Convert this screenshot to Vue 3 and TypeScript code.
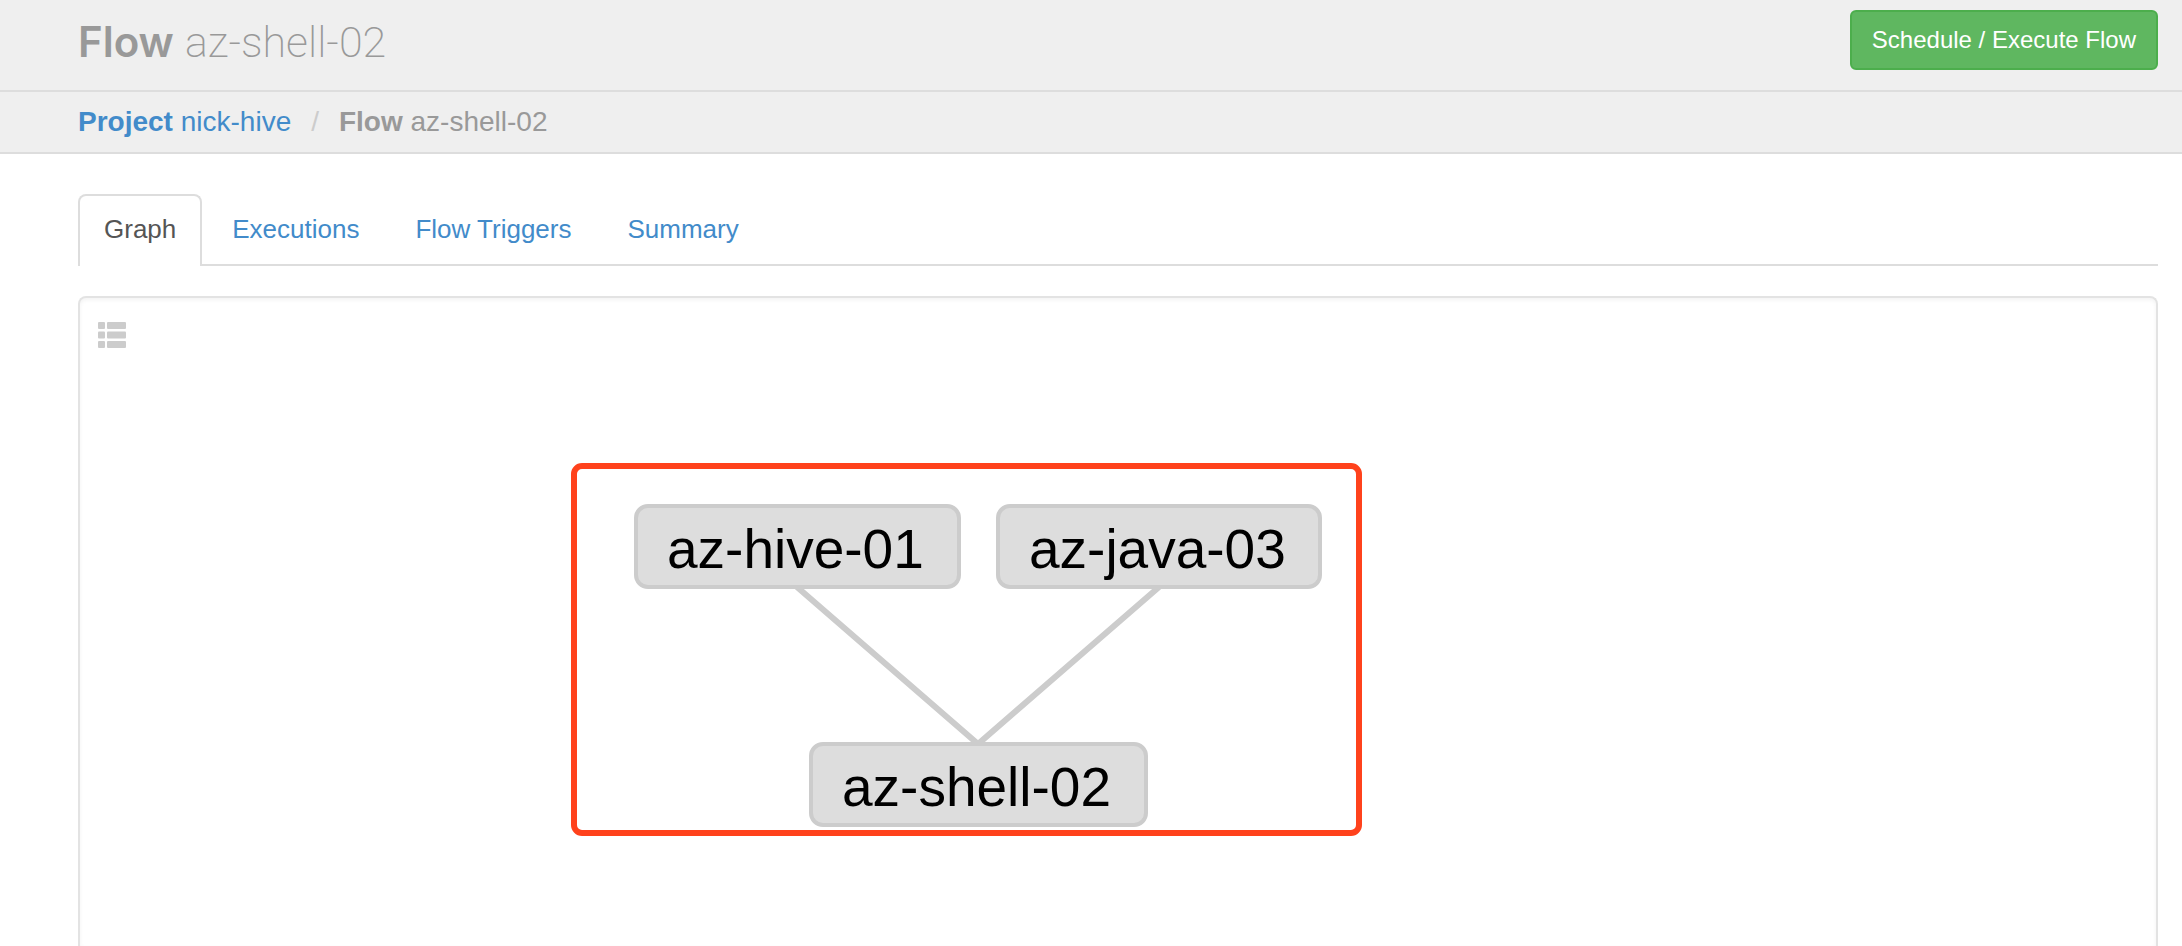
<script setup lang="ts">
interface Tab {
  label: string
  active?: boolean
}

interface FlowNode {
  id: string
  x: number
  y: number
  width: number
}

const tabs: Tab[] = [
  { label: 'Graph', active: true },
  { label: 'Executions' },
  { label: 'Flow Triggers' },
  { label: 'Summary' },
]

// Node positions on the graph canvas
const nodes: FlowNode[] = [
  { id: 'az-hive-01', x: 554, y: 206, width: 327 },
  { id: 'az-java-03', x: 916, y: 206, width: 326 },
  { id: 'az-shell-02', x: 729, y: 444, width: 339 },
]
</script>

<template>
  <div class="page">
    <header class="page-header">
      <h1><strong>Flow</strong> <span>az-shell-02</span></h1>
      <button type="button" class="execute">Schedule / Execute Flow</button>
    </header>

    <nav class="breadcrumb" aria-label="Breadcrumb">
      <a href="#"><strong>Project</strong> nick-hive</a>
      <span class="slash">/</span>
      <span><strong>Flow</strong> az-shell-02</span>
    </nav>

    <main class="content">
      <nav class="tabs" aria-label="Flow views">
        <a
          v-for="tab in tabs"
          :key="tab.label"
          href="#"
          :class="{ active: tab.active }"
        >{{ tab.label }}</a>
      </nav>

      <section class="well">
        <button type="button" class="list-toggle" aria-label="Job list">
          <svg width="28" height="26" viewBox="0 0 28 26" fill="#ccc">
            <g v-for="row in 3" :key="row" :transform="`translate(0 ${(row - 1) * 9.5})`">
              <rect width="7" height="7" rx="1" />
              <rect x="9" width="19" height="7" rx="1" />
            </g>
          </svg>
        </button>

        <svg class="edges" width="1400" height="600" viewBox="0 0 1400 600">
          <path d="M717 289 L898 446 L1079 289" />
        </svg>
        <div
          v-for="node in nodes"
          :key="node.id"
          class="node"
          :style="{ left: node.x + 'px', top: node.y + 'px', width: node.width + 'px' }"
        >{{ node.id }}</div>
        <div class="highlight"></div>
      </section>
    </main>
  </div>
</template>

<style>
body {
  margin: 0;
  background: #fff;
}
</style>

<style scoped>
.page {
  box-sizing: border-box;
  display: flex;
  flex-direction: column;
  min-height: 100vh;
  font-family: "Liberation Sans", Arial, sans-serif;
  font-size: 26px;
  color: #999;
}

.page * {
  box-sizing: border-box;
}

a {
  color: #428bca;
  text-decoration: none;
}

.page-header {
  display: flex;
  justify-content: space-between;
  align-items: flex-start;
  padding: 10px 24px 16px 78px;
  background: #efefef;
  border-bottom: 2px solid #ddd;
}

h1 {
  display: flex;
  align-items: center;
  gap: 11px;
  margin: 0;
  font-family: Roboto, "Liberation Sans", sans-serif;
  font-size: 43px;
  line-height: 64px;
  font-weight: 200;
}

h1 strong {
  font-family: Inter, "Liberation Sans", sans-serif;
  font-size: 42px;
  font-weight: 600;
}

.execute {
  height: 60px;
  padding: 0 20px;
  border: 2px solid #4cae4c;
  border-radius: 6px;
  background: #5fb760;
  color: #fff;
  font-family: inherit;
  font-size: 24px;
}

.breadcrumb {
  display: flex;
  gap: 20px;
  padding: 10px 24px 10px 78px;
  background: #efefef;
  border-bottom: 2px solid #ddd;
  font-size: 28px;
  line-height: 40px;
}

.slash {
  color: #ccc;
}

.content {
  flex: 1;
  display: flex;
  flex-direction: column;
  gap: 30px;
  padding: 40px 24px 0 78px;
}

.tabs {
  display: flex;
  gap: 4px;
  border-bottom: 2px solid #ddd;
}

.tabs a {
  margin-bottom: -2px;
  padding: 14px 24px 18px;
  border: 2px solid transparent;
  border-bottom: 0;
  border-radius: 8px 8px 0 0;
  line-height: 38px;
}

.tabs .active {
  border-color: #ddd;
  background: #fff;
  color: #555;
}

.well {
  position: relative;
  flex: 1;
  padding: 24px 18px;
  border: 2px solid #e3e3e3;
  border-bottom: 0;
  border-radius: 8px 8px 0 0;
  box-shadow: inset 0 2px 4px rgba(0, 0, 0, 0.05);
}

.list-toggle {
  display: block;
  padding: 0;
  border: 0;
  background: none;
}

.list-toggle svg {
  display: block;
}

.edges {
  position: absolute;
  top: 0;
  left: 0;
  fill: none;
  stroke: #ccc;
  stroke-width: 6px;
}

.node {
  position: absolute;
  height: 85px;
  padding-left: 29px;
  border: 4px solid #ccc;
  border-radius: 14px;
  background: #ddd;
  color: #000;
  font-size: 55px;
  line-height: 82px;
  white-space: nowrap;
}

.highlight {
  position: absolute;
  top: 165px;
  left: 491px;
  width: 791px;
  height: 373px;
  border: 6px solid #ff421c;
  border-radius: 11px;
  pointer-events: none;
}
</style>
